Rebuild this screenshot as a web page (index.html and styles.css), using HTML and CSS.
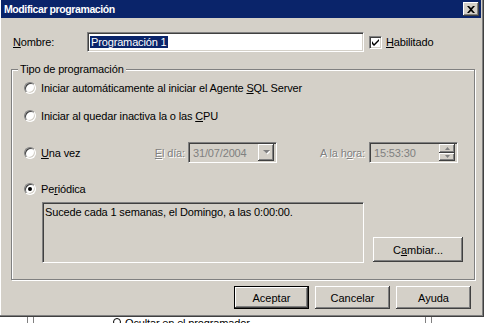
FILE: index.html
```html
<!DOCTYPE html>
<html lang="es">
<head>
    <meta charset="UTF-8">
    <title>Modificar programación</title>
    <link rel="stylesheet" href="styles.css">
</head>
<body>
    <div class="window">
        <div class="titlebar">
            <span class="title">Modificar programación</span>
            <span class="close">
                <svg width="8" height="7" viewBox="0 0 8 7"><path d="M0 0h2l2 2 2-2h2L5 3.5 8 7H6L4 5 2 7H0l3-3.5z" fill="#000"/></svg>
            </span>
        </div>

        <div class="name-row">
            <span class="name-label"><u>N</u>ombre:</span>
            <div class="textbox sunken"><span class="selected">Programación 1</span></div>
            <span class="checkbox sunken">
                <svg width="7" height="7" viewBox="0 0 7 7"><path d="M0 2v3l2 2 5-5V-0L2 5z" fill="#000"/></svg>
            </span>
            <span class="check-label"><u>H</u>abilitado</span>
        </div>

        <div class="group">
            <span class="caption">Tipo de programación</span>

            <div class="option">
                <span class="radio"></span>
                <span class="option-label">Iniciar automáticamente al iniciar el Agente <u>S</u>QL Server</span>
            </div>
            <div class="option second">
                <span class="radio"></span>
                <span class="option-label">Iniciar al quedar inactiva la o las <u>C</u>PU</span>
            </div>
            <div class="option once">
                <span class="radio"></span>
                <span class="option-label once-label"><u>U</u>na vez</span>
                <span class="field-label day-label"><u>E</u>l día:</span>
                <div class="combo sunken">
                    <span class="field-text">31/07/2004</span>
                    <span class="drop-btn">
                        <svg width="7" height="5" viewBox="0 0 7 5"><path d="M1 1h7L4.5 4.5z" fill="#fff"/><path d="M0 0h7L3.5 3.5z" fill="#808080"/></svg>
                    </span>
                </div>
                <span class="field-label hour-label">A la h<u>o</u>ra:</span>
                <div class="spin sunken">
                    <span class="field-text">15:53:30</span>
                    <span class="spin-btns">
                        <span class="spin-btn"><svg width="5" height="3" viewBox="0 0 5 3"><path d="M2.5 0L5 3H0z" fill="#808080"/></svg></span>
                        <span class="spin-btn"><svg width="5" height="3" viewBox="0 0 5 3"><path d="M0 0h5L2.5 3z" fill="#808080"/></svg></span>
                    </span>
                </div>
            </div>
            <div class="option periodic">
                <span class="radio checked"></span>
                <span class="option-label">Pe<u>r</u>iódica</span>
            </div>
            <div class="details">
                <div class="summary sunken">Sucede cada 1 semanas, el Domingo, a las 0:00:00.</div>
                <button class="button change">C<u>a</u>mbiar...</button>
            </div>
        </div>

        <div class="actions">
            <button class="button default">Aceptar</button>
            <button class="button">Cancelar</button>
            <button class="button">Ayuda</button>
        </div>
    </div>

    <div class="backdrop">
        <span class="bar"></span>
        <span class="dot"></span>
        <span class="back-text">Ocultar en el programador</span>
        <span class="bar right-bar"></span>
    </div>
</body>
</html>
```

FILE: styles.css
```css
* {
    margin: 0;
    padding: 0;
    box-sizing: border-box;
}

body {
    font-family: "Liberation Sans", Arial, sans-serif;
    font-size: 11px;
    letter-spacing: -0.15px;
    color: #000;
    background: #fff;
    width: 486px;
    height: 323px;
    overflow: hidden;
}

u {
    text-underline-offset: 1px;
}

/* window frame */
.window {
    width: 484px;
    height: 317px;
    background: #d4d0c8;
    border-right: 1px solid #404040;
    border-bottom: 1px solid #404040;
    box-shadow: inset -1px -1px 0 #808080, inset 1px 0 0 #fff;
    padding: 0 2px 0 1px;
    display: flex;
    flex-direction: column;
}

.titlebar {
    height: 18px;
    background: #0a246a;
    display: flex;
    align-items: center;
    justify-content: space-between;
    padding: 0 2px 0 3px;
}

.title {
    color: #fff;
    font-weight: bold;
    font-size: 10.5px;
    letter-spacing: -0.4px;
}

.close {
    width: 16px;
    height: 14px;
    background: #d4d0c8;
    display: flex;
    align-items: center;
    justify-content: center;
    box-shadow: inset -1px -1px 0 #404040, inset 1px 1px 0 #fff, inset -2px -2px 0 #808080;
}

.sunken {
    border: 1px solid;
    border-color: #808080 #fff #fff #808080;
    box-shadow: inset 1px 1px 0 #404040, inset -1px -1px 0 #d4d0c8;
}

/* name row */
.name-row {
    margin-top: 14px;
    height: 20px;
    display: flex;
    align-items: center;
    padding-left: 12px;
}

.name-label {
    width: 74px;
}

.textbox {
    width: 277px;
    height: 20px;
    background: #fff;
    padding: 2px 2px 0;
    line-height: 14px;
}

.selected {
    background: #0a246a;
    color: #fff;
    padding: 0 1px;
}

.checkbox {
    width: 13px;
    height: 13px;
    margin-left: 5px;
    background: #fff;
    display: flex;
    align-items: center;
    justify-content: center;
}

.check-label {
    margin-left: 4px;
}

/* group box */
.group {
    position: relative;
    margin: 17px 0 0 10px;
    width: 464px;
    height: 211px;
    border: 1px solid #808080;
    box-shadow: 1px 1px 0 #fff, inset 1px 1px 0 #fff;
    padding: 10px 0 0 12px;
}

.caption {
    position: absolute;
    top: -7px;
    left: 6px;
    padding: 0 2px;
    line-height: 13px;
    background: #d4d0c8;
}

.option {
    display: flex;
    align-items: center;
    height: 16px;
}

.option.second {
    margin-top: 12px;
}

.option.once {
    margin-top: 18px;
    height: 21px;
}

.option.periodic {
    margin-top: 18px;
}

.radio {
    width: 12px;
    height: 12px;
    border-radius: 50%;
    background: #fff;
    border: 1px solid;
    border-color: #808080 #fff #fff #808080;
    box-shadow: inset 1px 1px 0 #404040, inset -1px -1px 0 #d4d0c8;
    position: relative;
}

.radio.checked::after {
    content: "";
    position: absolute;
    left: 3px;
    top: 3px;
    width: 4px;
    height: 4px;
    border-radius: 50%;
    background: #000;
}

.option-label {
    margin-left: 5px;
}

.once-label {
    width: 105px;
}

.field-label {
    color: #808080;
    text-shadow: 1px 1px 0 #fff;
}

.day-label {
    width: 42px;
    text-align: right;
    padding-right: 3px;
}

.hour-label {
    width: 92px;
    text-align: right;
    padding-right: 4px;
}

.combo,
.spin {
    width: 89px;
    height: 21px;
    display: flex;
    align-items: center;
    justify-content: space-between;
    padding: 2px;
    background: #d4d0c8;
}

.field-text {
    color: #808080;
    padding-left: 2px;
}

.drop-btn {
    width: 16px;
    height: 17px;
    display: flex;
    align-items: center;
    justify-content: center;
    box-shadow: inset -1px -1px 0 #404040, inset 1px 1px 0 #fff, inset -2px -2px 0 #808080;
}

.spin-btns {
    display: flex;
    flex-direction: column;
    width: 16px;
    height: 17px;
}

.spin-btn {
    flex: 1;
    display: flex;
    align-items: center;
    justify-content: center;
    box-shadow: inset -1px -1px 0 #404040, inset 1px 1px 0 #fff, inset -2px -2px 0 #808080;
}

.details {
    display: flex;
    align-items: flex-end;
    margin: 5px 0 0 18px;
    height: 61px;
}

.summary {
    width: 322px;
    height: 61px;
    background: #d4d0c8;
    padding: 3px 2px;
    line-height: 13px;
}

/* buttons */
.button {
    width: 75px;
    height: 23px;
    background: #d4d0c8;
    border: none;
    font: inherit;
    color: #000;
    box-shadow: inset -1px -1px 0 #404040, inset 1px 1px 0 #fff, inset -2px -2px 0 #808080;
}

.button.default {
    border: 1px solid #000;
}

.button.change {
    width: 90px;
    height: 25px;
    margin: 0 0 1px 9px;
}

.actions {
    display: flex;
    justify-content: flex-end;
    gap: 6px;
    margin-top: 6px;
    padding-right: 10px;
}

/* window behind the dialog */
.backdrop {
    height: 6px;
    display: flex;
    align-items: flex-start;
    overflow: hidden;
}

.bar {
    width: 7px;
    height: 6px;
    margin-left: 27px;
    border-left: 1px solid #808080;
    border-right: 1px solid #808080;
}

.dot {
    width: 8px;
    height: 8px;
    margin: 1px 0 0 79px;
    border-radius: 50%;
    border: 1px solid #000;
}

.back-text {
    margin: 1px 0 0 4px;
    line-height: 11px;
    white-space: nowrap;
}

.right-bar {
    margin-left: 175px;
}
```
